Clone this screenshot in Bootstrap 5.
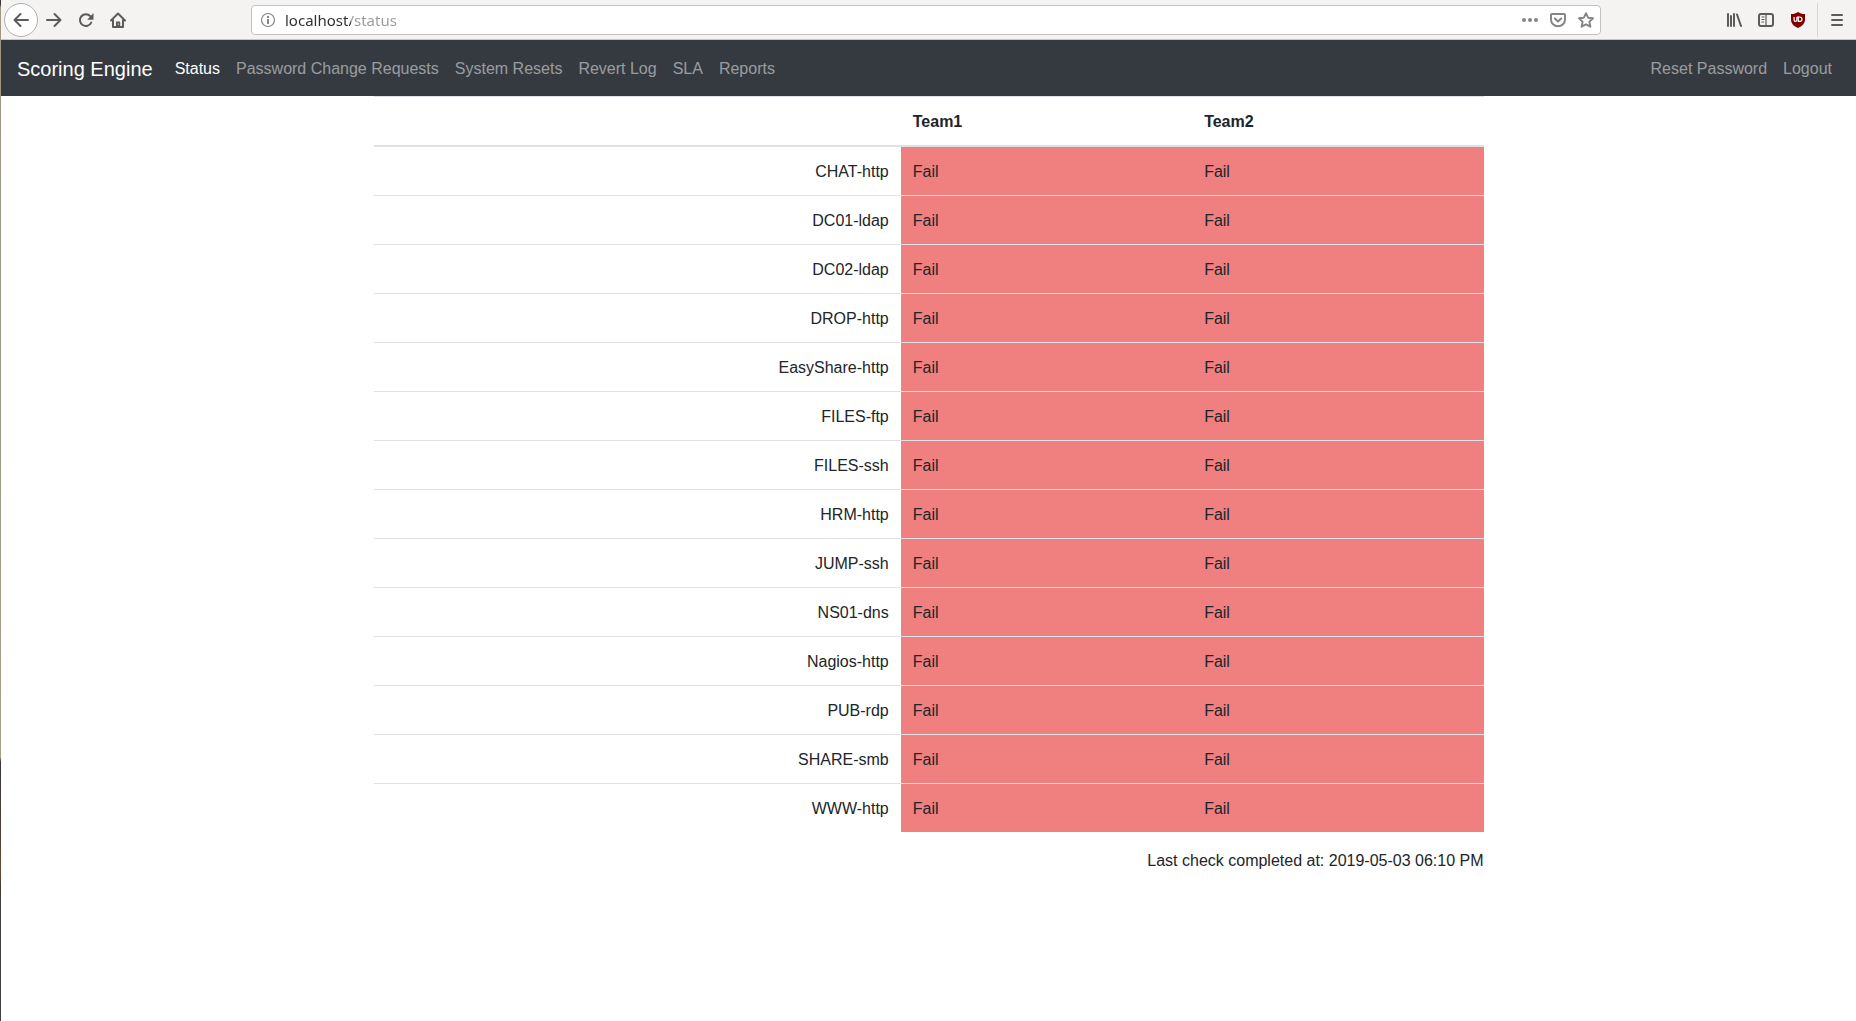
<!DOCTYPE html>
<html lang="en">
<head>
<meta charset="utf-8">
<meta name="viewport" content="width=device-width, initial-scale=1">
<title>Scoring Engine</title>
<link href="https://cdn.jsdelivr.net/npm/bootstrap@5.3.0/dist/css/bootstrap.min.css" rel="stylesheet">
<style>
  body {
    font-family: "Liberation Sans", Arial, sans-serif;
    color: #212529;
    min-height: 100vh;
    padding-left: 1px;
    background: linear-gradient(#3a3538 0, #3a3538 4px, #a09684 8px, #a89e8a 757px, #3a3538 762px, #5a4335 850px, #6b4a38 868px, #453a38 890px, #404044 920px, #404044 100%) left top / 1px 100% no-repeat #fff;
  }
  /* Browser toolbar */
  .chrome-bar {
    height: 40px;
    padding: 0 3px;
    background: #f4f3f1;
    border-bottom: 1px solid #c8c6c4;
  }
  .tool-btn {
    width: 32px;
    height: 34px;
    padding: 0;
    border: 0;
    background: none;
    display: flex;
    align-items: center;
    justify-content: center;
    color: #5c5b5a;
  }
  .tool-btn svg, .page-btn svg { width: 16px; height: 16px; display: block; }
  .tool-back {
    width: 34px;
    border: 1px solid #b1afac;
    border-radius: 50%;
    background: #fdfdfd;
  }
  .address {
    height: 30px;
    margin: 0 117px;
    padding-left: 8px;
    background: #fff;
    border: 1px solid #c3c1bf;
    border-radius: 4px;
  }
  .page-btn {
    width: 28px;
    height: 28px;
    padding: 0;
    border: 0;
    background: none;
    display: flex;
    align-items: center;
    justify-content: center;
    color: #858585;
  }
  .info-btn { width: 16px; }
  .address-input {
    min-width: 0;
    padding: 0;
    margin-left: 9px;
    border: 0;
    outline: 0;
    font: 15px/20px "Noto Sans", "Open Sans", sans-serif;
    background: linear-gradient(90deg, #2e2e2e 66px, #999 66px);
    -webkit-background-clip: text;
    background-clip: text;
    -webkit-text-fill-color: transparent;
  }
  .tool-sep { width: 1px; height: 34px; margin: 0 3px; background: #d7d5d3; }

  /* Site */
  .site-nav {
    --bs-navbar-color: rgba(255, 255, 255, .5);
    --bs-navbar-hover-color: rgba(255, 255, 255, .75);
    --bs-navbar-active-color: #fff;
    --bs-navbar-brand-color: #fff;
    --bs-navbar-brand-margin-end: 14px;
    padding: 9px 0 7px;
    background: #343a40;
  }
  .board { max-width: 1110px; }
  .status-table {
    --bs-table-color: #212529;
    --bs-table-bg: transparent;
    border-collapse: separate;
    border-spacing: 0;
    table-layout: fixed;
  }
  .status-table > :not(caption) > * > * {
    padding: 13px 12px 11px;
    border-width: 1px 0 0;
    border-color: #dee2e6;
  }
  .status-table > thead > tr > * { border-bottom-width: 2px; }
  .status-table > tbody > tr:first-child > * { border-top-width: 0; }
  .status-table > tbody > tr > th { font-weight: 400; text-align: right; }
  .status-table > tbody > tr > td { background-color: #f08080; }
  .col-service { width: 47.5%; }
  .last-check { margin-top: 17px; }
</style>
</head>
<body>
<header class="chrome-bar d-flex align-items-center">
  <button class="tool-btn tool-back" type="button" aria-label="Back">
    <svg viewBox="0 0 16 16" fill="none" stroke="currentColor" stroke-width="2" stroke-linecap="round" stroke-linejoin="round"><path d="M15 8H1.500M7.500 2L1.500 8l6 6"/></svg>
  </button>
  <button class="tool-btn" type="button" aria-label="Forward">
    <svg viewBox="0 0 16 16" fill="none" stroke="currentColor" stroke-width="2" stroke-linecap="round" stroke-linejoin="round"><path d="M1 8h13.500M8.500 2l6 6-6 6"/></svg>
  </button>
  <button class="tool-btn" type="button" aria-label="Reload">
    <svg viewBox="0 0 16 16"><path d="M13.200 10.600A5.900 5.900 0 1 1 12.300 4.200" fill="none" stroke="currentColor" stroke-width="2" stroke-linecap="round"/><path d="M15.500 1v6.300a.5.5 0 0 1-.5.500H9.200z" fill="currentColor"/></svg>
  </button>
  <button class="tool-btn" type="button" aria-label="Home">
    <svg viewBox="0 0 16 16" fill="none" stroke="currentColor" stroke-width="2" stroke-linecap="round" stroke-linejoin="round"><path d="M1 8.500L8 1.500l7 7M3 8v7h10V8"/><path d="M6 15v-5.500h4V15z" fill="currentColor" stroke="none"/><path d="M7 10v5M9.500 10v5" stroke-width="1.500" stroke-linecap="butt"/><path d="M8.300 11.500v1.200" stroke="#f4f3f1" stroke-width="1" stroke-linecap="butt"/></svg>
  </button>

  <div class="address d-flex align-items-center flex-grow-1">
    <button class="page-btn info-btn" type="button" aria-label="Site information">
      <svg viewBox="0 0 16 16"><circle cx="8" cy="8" r="6.500" fill="none" stroke="currentColor" stroke-width="1.200"/><path d="M7 4h2v2H7zM7 7h2v5H7z" fill="currentColor"/></svg>
    </button>
    <input class="address-input flex-grow-1" type="text" value="localhost/status" aria-label="Address" spellcheck="false">
    <button class="page-btn" type="button" aria-label="Page actions">
      <svg viewBox="0 0 16 16" fill="currentColor"><circle cx="2" cy="8" r="2"/><circle cx="8" cy="8" r="2"/><circle cx="14" cy="8" r="2"/></svg>
    </button>
    <button class="page-btn" type="button" aria-label="Save to Pocket">
      <svg viewBox="0 0 16 16" fill="none" stroke="currentColor" stroke-width="2" stroke-linecap="round" stroke-linejoin="round"><path d="M2 2h12a1 1 0 0 1 1 1v4.500a7 6.800 0 0 1-14 0V3a1 1 0 0 1 1-1z"/><path d="M4.800 6.500L8 9.500l3.200-3"/></svg>
    </button>
    <button class="page-btn" type="button" aria-label="Bookmark this page">
      <svg viewBox="0 0 16 16" fill="none" stroke="currentColor" stroke-width="1.900" stroke-linejoin="round"><path d="M8 1.200l2.100 4.500 4.900.6-3.600 3.400 1 5L8 12.300l-4.400 2.400 1-5L1 6.300l4.900-.6z"/></svg>
    </button>
  </div>

  <button class="tool-btn" type="button" aria-label="Library">
    <svg viewBox="0 0 16 16" fill="none" stroke="currentColor" stroke-width="2" stroke-linecap="round"><path d="M2 2v12M5 4v10M8 2v12M11 2.500l4 11.500"/></svg>
  </button>
  <button class="tool-btn" type="button" aria-label="Sidebars">
    <svg viewBox="0 0 16 16" fill="none" stroke="currentColor"><rect x="1" y="2" width="14" height="12" rx="2" stroke-width="2"/><path d="M8 2v12" stroke-width="1.200"/><path d="M3.500 5h3M3.500 7.500h3M3.500 10h2.500" stroke-width="1"/></svg>
  </button>
  <button class="tool-btn" type="button" aria-label="uBlock Origin">
    <svg viewBox="0 0 16 16"><path d="M8 0c2 1.400 4.300 2.100 7 2v5.500c0 4.200-3 6.800-7 8.500-4-1.700-7-4.300-7-8.500V2c2.700.1 5-.6 7-2z" fill="#800000"/><path d="M4.100 5v3.100c0 .9.500 1.400 1.300 1.400s1.500-.5 1.500-1.400V5M8.300 5v4.400h1.200c1.500 0 2.500-.8 2.500-2.200S11 5 9.500 5H6.900" fill="none" stroke="#fff" stroke-width="1.200"/></svg>
  </button>
  <span class="tool-sep"></span>
  <button class="tool-btn" type="button" aria-label="Open menu">
    <svg viewBox="0 0 16 16" fill="none" stroke="currentColor" stroke-width="2" stroke-linecap="round"><path d="M3 3h10M3 8h10M3 13h10"/></svg>
  </button>
</header>

<nav class="navbar navbar-expand site-nav">
  <div class="container-fluid px-3">
    <a class="navbar-brand" href="#">Scoring Engine</a>
    <ul class="navbar-nav me-auto">
      <li class="nav-item"><a class="nav-link active" aria-current="page" href="#">Status</a></li>
      <li class="nav-item"><a class="nav-link" href="#">Password Change Requests</a></li>
      <li class="nav-item"><a class="nav-link" href="#">System Resets</a></li>
      <li class="nav-item"><a class="nav-link" href="#">Revert Log</a></li>
      <li class="nav-item"><a class="nav-link" href="#">SLA</a></li>
      <li class="nav-item"><a class="nav-link" href="#">Reports</a></li>
    </ul>
    <ul class="navbar-nav">
      <li class="nav-item"><a class="nav-link" href="#">Reset Password</a></li>
      <li class="nav-item"><a class="nav-link" href="#">Logout</a></li>
    </ul>
  </div>
</nav>

<main class="board mx-auto">
  <table class="table status-table mb-0">
    <thead>
      <tr><td class="col-service"></td><th scope="col">Team1</th><th scope="col">Team2</th></tr>
    </thead>
    <tbody>
      <tr><th scope="row">CHAT-http</th><td>Fail</td><td>Fail</td></tr>
      <tr><th scope="row">DC01-ldap</th><td>Fail</td><td>Fail</td></tr>
      <tr><th scope="row">DC02-ldap</th><td>Fail</td><td>Fail</td></tr>
      <tr><th scope="row">DROP-http</th><td>Fail</td><td>Fail</td></tr>
      <tr><th scope="row">EasyShare-http</th><td>Fail</td><td>Fail</td></tr>
      <tr><th scope="row">FILES-ftp</th><td>Fail</td><td>Fail</td></tr>
      <tr><th scope="row">FILES-ssh</th><td>Fail</td><td>Fail</td></tr>
      <tr><th scope="row">HRM-http</th><td>Fail</td><td>Fail</td></tr>
      <tr><th scope="row">JUMP-ssh</th><td>Fail</td><td>Fail</td></tr>
      <tr><th scope="row">NS01-dns</th><td>Fail</td><td>Fail</td></tr>
      <tr><th scope="row">Nagios-http</th><td>Fail</td><td>Fail</td></tr>
      <tr><th scope="row">PUB-rdp</th><td>Fail</td><td>Fail</td></tr>
      <tr><th scope="row">SHARE-smb</th><td>Fail</td><td>Fail</td></tr>
      <tr><th scope="row">WWW-http</th><td>Fail</td><td>Fail</td></tr>
    </tbody>
  </table>
  <p class="last-check text-end">Last check completed at: 2019-05-03 06:10 PM</p>
</main>
<script src="https://cdn.jsdelivr.net/npm/bootstrap@5.3.0/dist/js/bootstrap.bundle.min.js"></script>
</body>
</html>
